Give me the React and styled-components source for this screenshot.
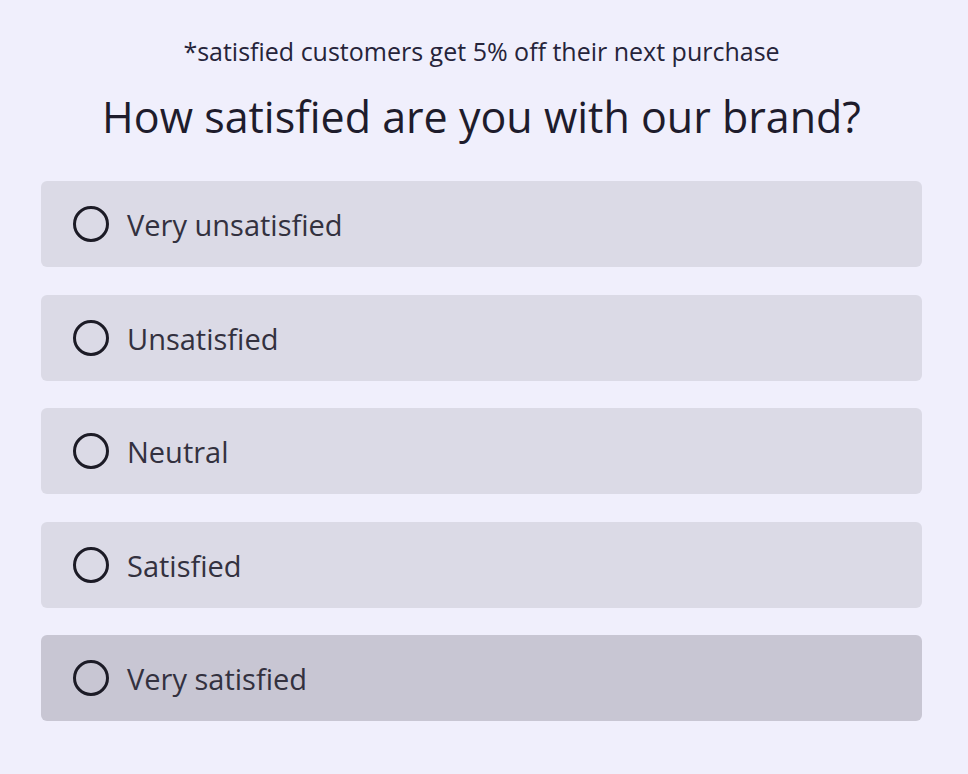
import React, { useState } from 'react';
import styled, { createGlobalStyle } from 'styled-components';

const options = ['Very unsatisfied', 'Unsatisfied', 'Neutral', 'Satisfied', 'Very satisfied'];

const App = () => {
  const [hovered] = useState(4);

  return (
    <>
      <GlobalStyle />
      <Page>
        <Note>*satisfied customers get 5% off their next purchase</Note>
        <Question>How satisfied are you with our brand?</Question>
        <OptionList>
          {options.map((label, i) => (
            <Option key={label} $active={i === hovered}>
              <Radio />
              <OptionLabel>{label}</OptionLabel>
            </Option>
          ))}
        </OptionList>
      </Page>
    </>
  );
};

const GlobalStyle = createGlobalStyle`
  body {
    margin: 0;
    background-color: #f0effc;
    font-family: "Open Sans", "Noto Sans", sans-serif;
  }
`;

const Page = styled.main`
  display: flex;
  flex-direction: column;
  align-items: center;
  padding: 34px 46px 54px 41px;
`;

const Note = styled.p`
  margin: 0;
  font-size: 25px;
  line-height: 34px;
  color: #26243a;
`;

const Question = styled.h1`
  margin: 21px 0 0;
  font-size: 43px;
  font-weight: 400;
  line-height: 56px;
  color: #1e1c2c;
`;

const OptionList = styled.div`
  display: flex;
  flex-direction: column;
  gap: 27.5px;
  margin-top: 36px;
  width: 100%;
`;

const Option = styled.label`
  display: flex;
  align-items: center;
  gap: 18px;
  height: 86px;
  padding: 0 32px;
  box-sizing: border-box;
  border-radius: 6px;
  background-color: ${({ $active }) => ($active ? '#c8c6d3' : '#dbdae6')};
  cursor: pointer;
`;

const Radio = styled.span`
  flex-shrink: 0;
  width: 36px;
  height: 36px;
  box-sizing: border-box;
  border: 3px solid #1c1b26;
  border-radius: 50%;
`;

const OptionLabel = styled.span`
  padding-top: 1px;
  font-size: 29px;
  color: #33313f;
`;

export default App;
